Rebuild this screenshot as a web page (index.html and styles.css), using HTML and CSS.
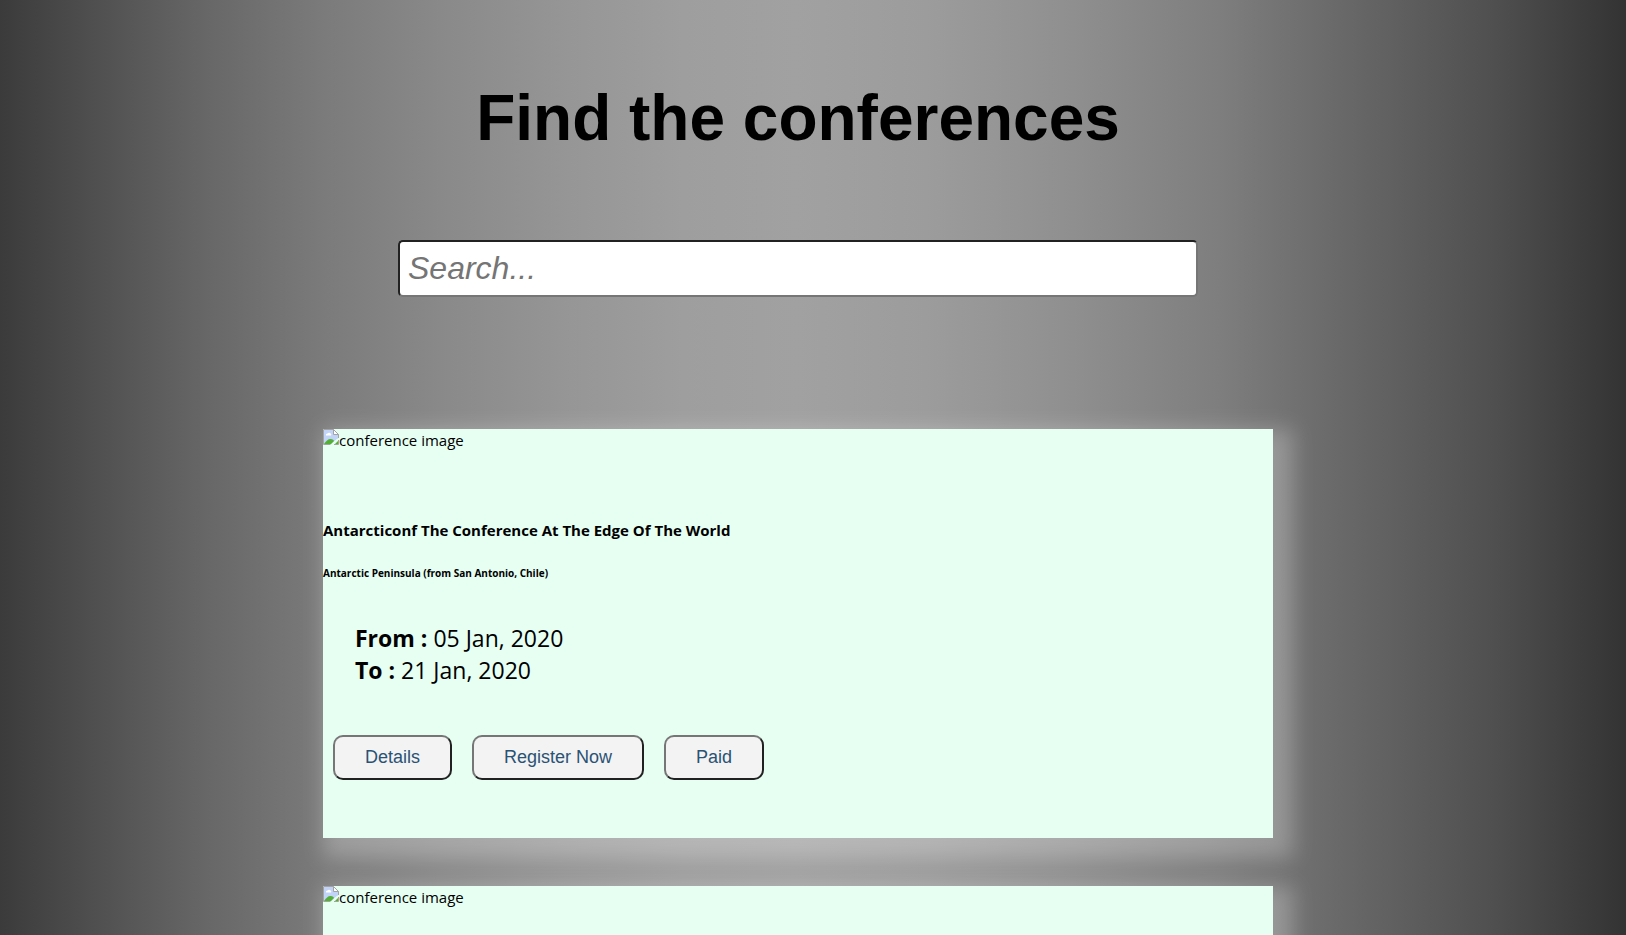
FILE: index.html
```html
<!DOCTYPE html>
<html lang="en">
<head>
<meta charset="utf-8">
<title>Find the conferences</title>
<link rel="stylesheet" href="styles.css">
</head>
<body>
<main class="page">
  <h1 class="title">Find the conferences</h1>
  <input class="search" type="search" placeholder="Search..." aria-label="Search conferences">
  <section class="list">
    <article class="card">
      <div class="picture">
        <svg class="broken" viewBox="0 0 16 16" aria-hidden="true"><path d="M.5 15.500V.5h10l5 5V9" fill="#c2d3f8" stroke="#a3a3a3"/><path d="M1 1h9.500L15 6v3l-7 6H1z" fill="#c2d3f8"/><path d="M10.500.5v5h5z" fill="#fff" stroke="#a3a3a3"/><path d="M3 6.500a1.500 1.500 0 0 1 1.500-2 2 2 0 0 1 3.500.5 1 1 0 0 1 0 1.500z" fill="#fff"/><path d="M1 15c2-3 4-5 6.500-5s3 1 3.500 2l-3 3z" fill="#54b035"/><path d="M12 15l3.500-3.500V15z" fill="#54b035"/><path d="M.5 15.500h7M11 15.500h4.500V11" fill="none" stroke="#a3a3a3"/></svg><span>conference image</span>
      </div>
      <h4 class="name">Antarcticonf The Conference At The Edge Of The World</h4>
      <h6 class="place">Antarctic Peninsula (from San Antonio, Chile)</h6>
      <div class="dates">
        <div><b>From :</b> 05 Jan, 2020</div>
        <div><b>To :</b> 21 Jan, 2020</div>
      </div>
      <div class="actions">
        <button class="action" type="button">Details</button>
        <button class="action" type="button">Register Now</button>
        <button class="action" type="button">Paid</button>
      </div>
    </article>
    <article class="card">
      <div class="picture">
        <svg class="broken" viewBox="0 0 16 16" aria-hidden="true"><path d="M.5 15.500V.5h10l5 5V9" fill="#c2d3f8" stroke="#a3a3a3"/><path d="M1 1h9.500L15 6v3l-7 6H1z" fill="#c2d3f8"/><path d="M10.500.5v5h5z" fill="#fff" stroke="#a3a3a3"/><path d="M3 6.500a1.500 1.500 0 0 1 1.500-2 2 2 0 0 1 3.500.5 1 1 0 0 1 0 1.500z" fill="#fff"/><path d="M1 15c2-3 4-5 6.500-5s3 1 3.500 2l-3 3z" fill="#54b035"/><path d="M12 15l3.500-3.500V15z" fill="#54b035"/><path d="M.5 15.500h7M11 15.500h4.500V11" fill="none" stroke="#a3a3a3"/></svg><span>conference image</span>
      </div>
    </article>
  </section>
</main>
</body>
</html>
```
FILE: styles.css
```css
* { box-sizing: border-box; }
body {
  margin: 0;
  color: #000;
  font-family: "Segoe UI", "Open Sans", sans-serif;
  font-size: 15px;
  background: linear-gradient(to right, #3b3b3b 0%, #505050 6%, #686868 13%, #7b7b7b 20%, #898989 27%, #969696 35%, #9e9e9e 42%, #a1a1a1 49%, #9c9c9c 57%, #8f8f8f 66%, #7e7e7e 75%, #6a6a6a 82%, #4f4f4f 92%, #333 100%);
}
.page {
  display: flex;
  flex-direction: column;
  align-items: center;
  padding: 80px 30px 48px 0;
}
.title {
  margin: 0;
  font: bold 64px/76px "Liberation Sans", sans-serif;
}
.search {
  width: 800px;
  max-width: 100%;
  height: 57px;
  margin: 84px 0 132px;
  padding: 0 8px;
  border: 2px solid;
  border-color: #212121 #767676 #767676 #212121;
  border-radius: 5px;
  background: #fff;
  font: italic 32px "Liberation Sans", sans-serif;
  appearance: none;
}
.search::placeholder { color: #757575; }
.list {
  display: flex;
  flex-direction: column;
  gap: 48px;
  width: 950px;
  max-width: 100%;
}
.card {
  min-height: 409px;
  background: #e6fff2;
  box-shadow: 10px 10px 20px 10px rgba(255, 255, 255, .25);
}
.picture {
  display: flex;
  line-height: 22px;
  height: 90px;
}
.broken { width: 16px; height: 16px; }
.name { margin: 0; font-size: 15px; line-height: 22px; }
.place { margin: 24px 0 0; font-size: 10px; line-height: 16px; }
.dates {
  padding: 41px 32px 0;
  font-size: 23px;
  line-height: 32px;
}
.actions {
  display: flex;
  gap: 20px;
  padding: 49px 10px 0;
}
.action {
  height: 45px;
  padding: 0 30px;
  border: 2px solid;
  border-color: #767676 #212121 #212121 #767676;
  border-radius: 10px;
  background: #f3f3f3;
  color: #2a5275;
  font: 18px "Liberation Sans", sans-serif;
}
```
